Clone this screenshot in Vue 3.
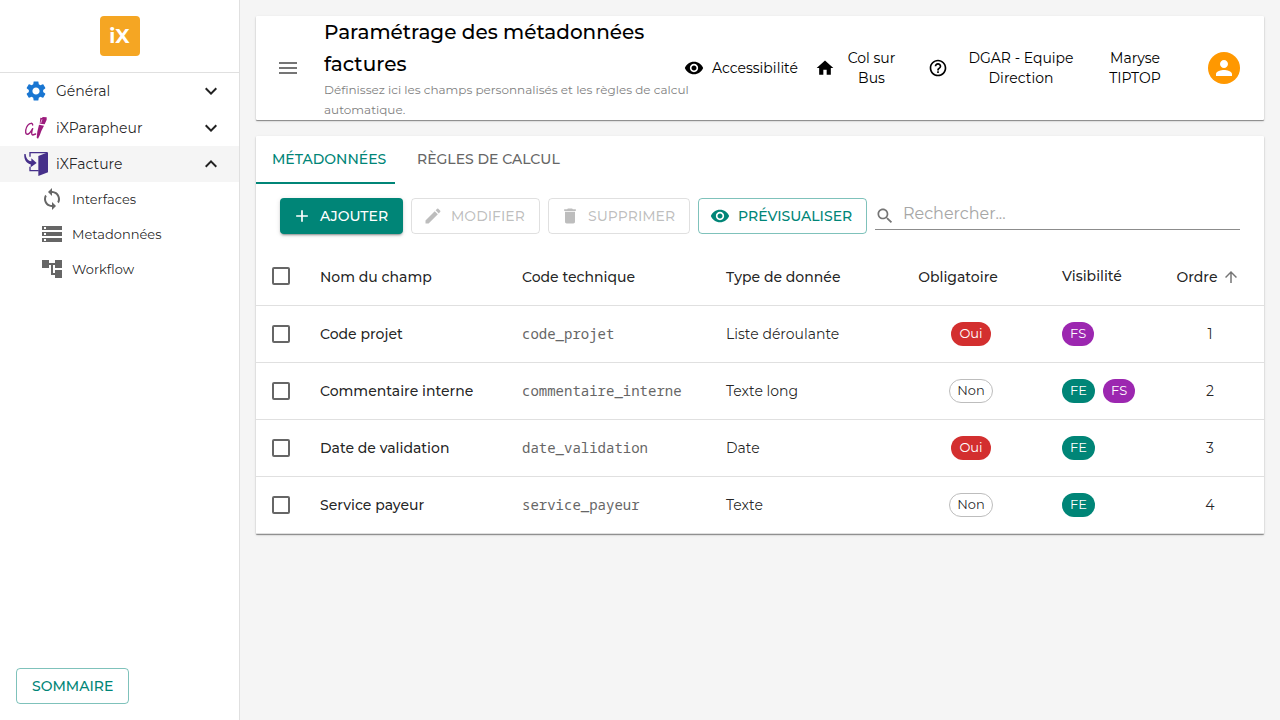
<script setup>
import { ref } from 'vue'

const icons = {
  settings: 'M19.14 12.94c.04-.3.06-.61.06-.94 0-.32-.02-.64-.07-.94l2.03-1.58c.18-.14.23-.41.12-.61l-1.92-3.32c-.12-.22-.37-.29-.59-.22l-2.39.96c-.5-.38-1.03-.7-1.62-.94l-.36-2.54c-.04-.24-.24-.41-.48-.41h-3.84c-.24 0-.43.17-.47.41l-.36 2.54c-.59.24-1.13.57-1.62.94l-2.39-.96c-.22-.08-.47 0-.59.22L2.74 8.87c-.12.21-.08.47.12.61l2.03 1.58c-.05.3-.09.63-.09.94s.02.64.07.94l-2.03 1.58c-.18.14-.23.41-.12.61l1.92 3.32c.12.22.37.29.59.22l2.39-.96c.5.38 1.03.7 1.62.94l.36 2.54c.05.24.24.41.48.41h3.84c.24 0 .44-.17.47-.41l.36-2.54c.59-.24 1.13-.56 1.62-.94l2.39.96c.22.08.47 0 .59-.22l1.92-3.32c.12-.22.07-.47-.12-.61zM12 15.6c-1.98 0-3.6-1.62-3.6-3.6s1.62-3.6 3.6-3.6 3.6 1.62 3.6 3.6-1.62 3.6-3.6 3.6z',
  more: 'M16.59 8.59 12 13.17 7.41 8.59 6 10l6 6 6-6z',
  less: 'm12 8-6 6 1.41 1.41L12 10.83l4.59 4.58L18 14z',
  sync: 'M12 4V1L8 5l4 4V6c3.31 0 6 2.69 6 6 0 1.01-.25 1.97-.7 2.8l1.46 1.46C19.54 15.03 20 13.57 20 12c0-4.42-3.58-8-8-8m0 14c-3.31 0-6-2.69-6-6 0-1.01.25-1.97.7-2.8L5.24 7.74C4.46 8.97 4 10.43 4 12c0 4.42 3.58 8 8 8v3l4-4-4-4z',
  storage: 'M2 20h20v-4H2zm2-3h2v2H4zM2 4v4h20V4zm4 3H4V5h2zm-4 7h20v-4H2zm2-3h2v2H4z',
  tree: 'M22 11V3h-7v3H9V3H2v8h7V8h2v10h4v3h7v-8h-7v3h-2V8h2v3z',
  menu: 'M3 18h18v-2H3zm0-5h18v-2H3zm0-7v2h18V6z',
  eye: 'M12 4.5C7 4.5 2.73 7.61 1 12c1.73 4.39 6 7.5 11 7.5s9.27-3.11 11-7.5c-1.73-4.39-6-7.5-11-7.5M12 17c-2.76 0-5-2.24-5-5s2.24-5 5-5 5 2.24 5 5-2.24 5-5 5m0-8c-1.66 0-3 1.34-3 3s1.34 3 3 3 3-1.34 3-3-1.34-3-3-3',
  home: 'M10 20v-6h4v6h5v-8h3L12 3 2 12h3v8z',
  help: 'M11 18h2v-2h-2zm1-16C6.48 2 2 6.48 2 12s4.48 10 10 10 10-4.48 10-10S17.52 2 12 2m0 18c-4.41 0-8-3.59-8-8s3.59-8 8-8 8 3.59 8 8-3.59 8-8 8m0-14c-2.21 0-4 1.79-4 4h2c0-1.1.9-2 2-2s2 .9 2 2c0 2-3 1.75-3 5h2c0-2.25 3-2.5 3-5 0-2.21-1.79-4-4-4',
  person: 'M12 12c2.21 0 4-1.79 4-4s-1.79-4-4-4-4 1.79-4 4 1.79 4 4 4m0 2c-2.67 0-8 1.34-8 4v2h16v-2c0-2.66-5.33-4-8-4',
  add: 'M19 13h-6v6h-2v-6H5v-2h6V5h2v6h6z',
  edit: 'M3 17.25V21h3.75L17.81 9.94l-3.75-3.75zM20.71 7.04c.39-.39.39-1.02 0-1.41l-2.34-2.34a.996.996 0 0 0-1.41 0l-1.83 1.83 3.75 3.75z',
  trash: 'M6 19c0 1.1.9 2 2 2h8c1.1 0 2-.9 2-2V7H6zM19 4h-3.5l-1-1h-5l-1 1H5v2h14z',
  search: 'M15.5 14h-.79l-.28-.27C15.41 12.59 16 11.11 16 9.5 16 5.91 13.09 3 9.5 3S3 5.91 3 9.5 5.91 16 9.5 16c1.61 0 3.09-.59 4.23-1.57l.27.28v.79l5 4.99L20.49 19zm-6 0C7.01 14 5 11.99 5 9.5S7.01 5 9.5 5 14 7.01 14 9.5 11.99 14 9.5 14',
  up: 'm4 12 1.41 1.41L11 7.83V20h2V7.83l5.58 5.59L20 12l-8-8z',
}

const subItems = [
  { label: 'Interfaces', icon: 'sync' },
  { label: 'Metadonnées', icon: 'storage' },
  { label: 'Workflow', icon: 'tree' },
]

const rows = [
  { name: 'Code projet', code: 'code_projet', type: 'Liste déroulante', required: true, tags: ['FS'] },
  { name: 'Commentaire interne', code: 'commentaire_interne', type: 'Texte long', required: false, tags: ['FE', 'FS'] },
  { name: 'Date de validation', code: 'date_validation', type: 'Date', required: true, tags: ['FE'] },
  { name: 'Service payeur', code: 'service_payeur', type: 'Texte', required: false, tags: ['FE'] },
]

const query = ref('')
</script>

<template>
  <div class="app">
    <aside class="sidebar">
      <div class="brand"><span class="logo">iX</span></div>
      <nav class="nav">
        <div class="nav-group">
          <button class="nav-item" type="button">
            <svg class="icon blue" viewBox="0 0 24 24"><path :d="icons.settings" /></svg>
            <span class="nav-label">Général</span>
            <svg class="icon" viewBox="0 0 24 24"><path :d="icons.more" /></svg>
          </button>
          <button class="nav-item" type="button">
            <svg class="icon" viewBox="0 0 72 72">
              <path
                d="M26 27C26 20 18 20 11 28C5 36 3 50 7 54C13 58 21 47 26 38C22 48 22 57 26 57L35 54"
                fill="none" stroke="#9c1b7c" stroke-width="4" stroke-linecap="round" stroke-linejoin="round"
              />
              <path fill="#9c1b7c" d="M49 5l5 1 2-3 12 1v7l-6 14-15-2zM45 26l15 3-8 16-4 11-6 12-4-3 2-18z" />
              <path fill="none" stroke="#fff" stroke-width="2" d="M54 10l-4 12" />
            </svg>
            <span class="nav-label">iXParapheur</span>
            <svg class="icon" viewBox="0 0 24 24"><path :d="icons.more" /></svg>
          </button>
        </div>
        <button class="nav-item open" type="button">
          <svg class="icon" viewBox="0 0 72 72">
            <path fill="none" stroke="#46308a" stroke-width="4" d="M18 14V2H70M18 44V56H44" />
            <path fill="#46308a" d="M43 12L72 1V61L43 72zM1 6C-1 22 8 35 20 37V46L38 33 22 19V28C13 27 6 19 5 6z" />
          </svg>
          <span class="nav-label">iXFacture</span>
          <svg class="icon" viewBox="0 0 24 24"><path :d="icons.less" /></svg>
        </button>
        <a v-for="s in subItems" :key="s.label" class="sub-item" href="#">
          <svg class="icon grey" viewBox="0 0 24 24"><path :d="icons[s.icon]" /></svg>
          <span>{{ s.label }}</span>
        </a>
      </nav>
      <div class="side-foot"><button class="btn outlined summary" type="button">SOMMAIRE</button></div>
    </aside>

    <main class="main">
      <header class="card topbar">
        <button class="menu-btn" type="button" aria-label="Menu">
          <svg class="icon" viewBox="0 0 24 24"><path :d="icons.menu" /></svg>
        </button>
        <div class="heading">
          <h1>Paramétrage des métadonnées<br>factures</h1>
          <p>Définissez ici les champs personnalisés et les règles de calcul<br>automatique.</p>
        </div>
        <div class="actions">
          <button class="top-btn access" type="button">
            <svg class="icon small" viewBox="0 0 24 24"><path :d="icons.eye" /></svg>
            <span>Accessibilité</span>
          </button>
          <button class="top-btn site" type="button">
            <svg class="icon small" viewBox="0 0 24 24"><path :d="icons.home" /></svg>
            <span>Col sur<br>Bus</span>
          </button>
          <button class="top-btn help" type="button" aria-label="Aide">
            <svg class="icon small" viewBox="0 0 24 24"><path :d="icons.help" /></svg>
          </button>
          <span class="team">DGAR - Equipe<br>Direction</span>
          <span class="user">Maryse<br>TIPTOP</span>
          <button class="avatar" type="button" aria-label="Profil">
            <svg class="icon" viewBox="0 0 24 24"><path :d="icons.person" /></svg>
          </button>
        </div>
      </header>

      <section class="card">
        <div class="tabs" role="tablist">
          <button class="tab active" type="button" role="tab" aria-selected="true">MÉTADONNÉES</button>
          <button class="tab" type="button" role="tab" aria-selected="false">RÈGLES DE CALCUL</button>
        </div>
        <div class="toolbar">
          <button class="btn filled add" type="button">
            <svg class="icon small" viewBox="0 0 24 24"><path :d="icons.add" /></svg>AJOUTER
          </button>
          <button class="btn outlined edit" type="button" disabled>
            <svg class="icon small" viewBox="0 0 24 24"><path :d="icons.edit" /></svg>MODIFIER
          </button>
          <button class="btn outlined delete" type="button" disabled>
            <svg class="icon small" viewBox="0 0 24 24"><path :d="icons.trash" /></svg>SUPPRIMER
          </button>
          <button class="btn outlined preview" type="button">
            <svg class="icon small" viewBox="0 0 24 24"><path :d="icons.eye" /></svg>PRÉVISUALISER
          </button>
          <label class="search">
            <svg class="icon small" viewBox="0 0 24 24"><path :d="icons.search" /></svg>
            <input v-model="query" type="text" placeholder="Rechercher..." aria-label="Rechercher">
          </label>
        </div>
        <table class="grid">
          <colgroup>
            <col class="c-check"><col class="c-name"><col class="c-code"><col class="c-type">
            <col class="c-req"><col class="c-vis"><col class="c-order">
          </colgroup>
          <thead>
            <tr>
              <th class="check plain"><input type="checkbox" aria-label="Tout sélectionner"></th>
              <th>Nom du champ</th>
              <th>Code technique</th>
              <th>Type de donnée</th>
              <th class="center"><span class="sort">Obligatoire<i class="sort-space"></i></span></th>
              <th class="plain">Visibilité</th>
              <th class="center">
                <span class="sort">Ordre<svg class="icon sort-icon" viewBox="0 0 24 24"><path :d="icons.up" /></svg></span>
              </th>
            </tr>
          </thead>
          <tbody>
            <tr v-for="(r, i) in rows" :key="r.code">
              <td class="check"><input type="checkbox" :aria-label="r.name"></td>
              <td class="name">{{ r.name }}</td>
              <td class="code">{{ r.code }}</td>
              <td>{{ r.type }}</td>
              <td class="center"><div class="chips"><span class="chip" :class="r.required ? 'yes' : 'no'">{{ r.required ? 'Oui' : 'Non' }}</span></div></td>
              <td><div class="chips"><span v-for="t in r.tags" :key="t" class="chip" :class="t.toLowerCase()">{{ t }}</span></div></td>
              <td class="center">{{ i + 1 }}</td>
            </tr>
          </tbody>
        </table>
      </section>
    </main>
  </div>
</template>

<style>
body { background: #f5f5f5; }
</style>

<style scoped>
.app {
  display: flex;
  min-height: 100vh;
  font-family: Montserrat, Inter, "Liberation Sans", sans-serif;
  font-size: 14px;
  line-height: 20px;
  color: rgba(0, 0, 0, 0.87);
}
.app *, .app *::after { box-sizing: border-box; }
button, input { font: inherit; color: inherit; margin: 0; }
button { border: 0; background: none; padding: 0; cursor: pointer; }
button:disabled { cursor: default; }
.icon { width: 24px; height: 24px; fill: currentColor; flex: none; display: block; }
.icon.small { width: 20px; height: 20px; }

.sidebar {
  flex: none;
  width: 240px;
  background: #fff;
  border-right: 1px solid #e0e0e0;
  display: flex;
  flex-direction: column;
}
.brand { padding: 16px; display: flex; justify-content: center; border-bottom: 1px solid #e0e0e0; }
.logo {
  width: 40px;
  height: 40px;
  border-radius: 4px;
  background: #f5a623;
  color: #fff;
  font-size: 20px;
  font-weight: 700;
  line-height: 40px;
  text-align: center;
}
.nav { flex: 1; }
.nav-group { display: grid; gap: 1px; }
.nav-item { display: flex; align-items: center; gap: 8px; width: 100%; height: 36px; padding: 0 16px 0 24px; text-align: left; }
.nav-item.open { background: #f5f5f5; }
.nav-label { flex: 1; }
.blue { color: #1976d2; }
.grey { color: #666; }
.sub-item { display: flex; align-items: center; gap: 8px; height: 35px; padding: 0 0 1px 40px; font-size: 13px; color: inherit; text-decoration: none; }
.side-foot { padding: 16px; }

.main { flex: 1; min-width: 0; padding: 16px; display: flex; flex-direction: column; gap: 16px; }
.card { background: #fff; box-shadow: 0 1px 1px rgba(0, 0, 0, 0.4), 0 1px 3px rgba(0, 0, 0, 0.12); border-radius: 1px; }
.topbar { display: flex; align-items: center; padding: 0 24px 0 20px; color: #000; }
.menu-btn { color: #757575; margin-right: 24px; }
.heading { flex: 1; min-width: 0; white-space: nowrap; }
h1 { margin: 0; font-size: 20px; line-height: 32px; font-weight: 500; }
p { margin: 0; font-size: 12px; line-height: 20px; color: #7f7f7f; }
.actions { display: flex; align-items: center; text-align: center; }
.top-btn { display: flex; align-items: center; gap: 8px; }
.access { width: 131px; }
.site { width: 97px; margin-right: 16px; }
.site span { flex: 1; padding-right: 12px; white-space: nowrap; }
.team { width: 146px; }
.user { width: 82px; }
.avatar { width: 32px; height: 32px; margin-left: 32px; border-radius: 50%; background: #ff9800; color: #fff; display: grid; place-items: center; }

.tabs { display: flex; height: 48px; }
.tab { position: relative; padding: 0 14px 2px 16px; font-weight: 500; color: #666; min-width: 145px; text-align: left; }
.tab.active { color: #008577; }
.tab.active::after { content: ""; position: absolute; left: 0; right: 6px; bottom: 0; height: 2px; background: #008577; }
.toolbar { display: flex; align-items: center; gap: 8px; height: 64px; padding: 0 24px; }
.btn { display: inline-flex; align-items: center; gap: 8px; height: 36px; padding: 0 12px; border-radius: 4px; font-weight: 500; white-space: nowrap; }
.outlined { border: 1px solid rgba(0, 133, 119, 0.5); padding: 0 11px; color: #008577; }
.outlined:disabled { border-color: rgba(0, 0, 0, 0.12); color: rgba(0, 0, 0, 0.26); }
.filled { background: #008577; color: #fff; box-shadow: 0 3px 1px -2px rgba(0, 0, 0, 0.2), 0 2px 2px rgba(0, 0, 0, 0.14), 0 1px 5px rgba(0, 0, 0, 0.12); }
.summary { min-width: 112px; padding: 0 15px; }
.add { min-width: 123px; }
.edit { min-width: 129px; }
.delete { min-width: 142px; }
.preview { min-width: 169px; }
.search { flex: 1; display: flex; align-items: center; gap: 8px; height: 28px; border-bottom: 1px solid #8c8c8c; color: #757575; }
.search input { flex: 1; min-width: 0; border: 0; outline: 0; padding: 0 0 4px; background: none; font-size: 16px; }
.search input::placeholder { color: #a6a6a6; opacity: 1; }

.grid { width: 100%; table-layout: fixed; border-collapse: separate; border-spacing: 0; }
.c-check { width: 48px; }
.c-name { width: 202px; }
.c-code { width: 204px; }
.c-type { width: 186px; }
.c-req { width: 150px; }
.c-vis { width: 110px; }
.c-order { width: 108px; }
th, td { height: 57px; padding: 0 16px; border-bottom: 1px solid #e0e0e0; text-align: left; vertical-align: middle; white-space: nowrap; }
th { height: 58px; font-weight: 500; }
th.plain { padding-bottom: 2px; }
.center { text-align: center; padding: 0; }
.check { padding-right: 0; }
.check input { appearance: none; display: block; width: 18px; height: 18px; border: 2px solid #666; border-radius: 2px; }
.name { font-weight: 500; }
.code { font-family: "Noto Sans Mono", "Liberation Mono", monospace; color: #666; }
.sort { display: inline-flex; align-items: center; }
.sort-space { width: 26px; }
.sort-icon { width: 18px; height: 18px; margin: 0 4px; color: #757575; }
.chips { display: flex; gap: 8px; }
.center .chips { justify-content: center; }
.chip { height: 24px; line-height: 22px; padding: 0 8px; border-radius: 12px; font-size: 13px; color: #fff; }
.yes { background: #d32f2f; }
.no { border: 1px solid #bdbdbd; line-height: 20px; padding: 0 7px; color: rgba(0, 0, 0, 0.87); }
.fe { background: #008577; }
.fs { background: #9c27b0; }
</style>
